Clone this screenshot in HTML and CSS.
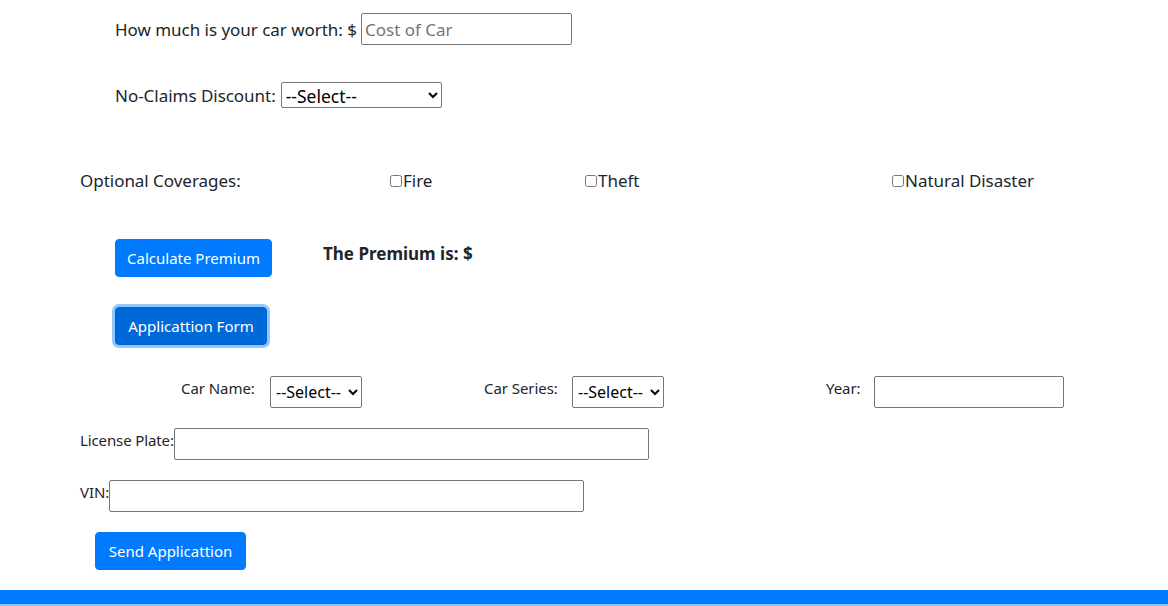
FILE: index.html
```html
<!DOCTYPE html>
<html>
<head>
<meta charset="utf-8">
<link rel="stylesheet" href="styles.css">
</head>
<body>
<main class="page">
  <div class="row row-worth">
    <label class="lbl-lg">How much is your car worth: $</label>
    <input class="inp inp-cost" type="text" placeholder="Cost of Car">
  </div>
  <div class="row row-ncd">
    <label class="lbl-lg">No-Claims Discount:</label>
    <select class="sel sel-ncd"><option>--Select--</option></select>
  </div>
  <div class="row row-cov">
    <span class="lbl-lg cov-title">Optional Coverages:</span>
    <label class="lbl-lg cov cov-fire"><input type="checkbox" class="chk">Fire</label>
    <label class="lbl-lg cov cov-theft"><input type="checkbox" class="chk">Theft</label>
    <label class="lbl-lg cov cov-nat"><input type="checkbox" class="chk">Natural Disaster</label>
  </div>
  <div class="row row-calc">
    <button class="btn">Calculate Premium</button>
    <span class="premium">The Premium is: $</span>
  </div>
  <div class="row row-app">
    <button class="btn btn-focus">Applicattion Form</button>
  </div>
  <div class="row row-car">
    <label class="lbl-sm lbl-name">Car Name:</label>
    <select class="sel sel-sm"><option>--Select--</option></select>
    <label class="lbl-sm lbl-series">Car Series:</label>
    <select class="sel sel-sm"><option>--Select--</option></select>
    <label class="lbl-sm lbl-year">Year:</label>
    <input class="inp inp-year" type="text">
  </div>
  <div class="row row-plate">
    <label class="lbl-sm lbl-plate">License Plate:</label>
    <input class="inp inp-wide" type="text">
  </div>
  <div class="row row-vin">
    <label class="lbl-sm">VIN:</label>
    <input class="inp inp-wide" type="text">
  </div>
  <div class="row row-send">
    <button class="btn">Send Applicattion</button>
  </div>
</main>
<footer class="bar"></footer>
</body>
</html>
```
FILE: styles.css
```css
* { box-sizing: border-box; }
html, body { margin: 0; padding: 0; background: #fff; }
body {
  font-family: "Noto Sans", "Open Sans", sans-serif;
  color: #212529;
  height: 606px;
  overflow: hidden;
}
.page { height: 590px; padding-top: 13px; }
.row { display: flex; align-items: center; }
.lbl-lg { font-size: 17px; letter-spacing: -0.03px; }
.lbl-sm { font-size: 15px; letter-spacing: -0.06px; }

.inp {
  font-family: inherit;
  border: 1px solid #767676;
  border-radius: 2px;
  background: #fff;
  padding: 1px 3px;
}
.inp::placeholder { color: #757575; }
.sel {
  font-family: inherit;
  border: 1px solid #767676;
  border-radius: 2px;
  background: #fff;
  color: #000;
}

.row-worth { padding-left: 115px; height: 32px; }
.row-worth .lbl-lg { margin-right: 4px; }
.inp-cost { width: 211px; height: 32px; font-size: 17px; }

.row-ncd { margin-top: 37px; padding-left: 115px; height: 26px; }
.row-ncd .lbl-lg { margin-right: 5px; }
.sel-ncd { width: 161px; height: 26px; font-size: 17.5px; }

.row-cov { margin-top: 60px; height: 25px; }
.cov-title { width: 390px; padding-left: 80px; }
.cov { display: flex; align-items: center; }
.cov-fire { width: 195px; }
.cov-theft { width: 307px; }
.chk {
  margin: 0 1px 0 0;
  width: 12px;
  height: 12px;
}

.row-calc { margin-top: 46px; padding-left: 115px; height: 38px; }
.btn {
  font-family: inherit;
  font-size: 15px;
  color: #fff;
  background: #007bff;
  border: 1px solid #007bff;
  border-radius: 4px;
  height: 38px;
  padding: 0;
  white-space: nowrap;
  text-align: center;
}
.row-calc .btn { width: 157px; }
.premium {
  font-weight: 700;
  font-size: 17px;
  margin-left: 51px;
  margin-top: -9px;
}

.row-app { margin-top: 30px; padding-left: 115px; height: 38px; }
.btn-focus {
  width: 152px;
  background: #0069d9;
  border-color: #0062cc;
  box-shadow: 0 0 0 3px rgba(38, 143, 255, 0.5);
}

.row-car { margin-top: 31px; height: 32px; align-items: flex-start; }
.row-car .lbl-sm { padding-top: 2px; }
.lbl-name { margin-left: 181px; width: 89px; }
.lbl-series { margin-left: 122px; width: 88px; }
.lbl-year { margin-left: 162px; width: 48px; }
.sel-sm { width: 92px; height: 32px; font-size: 16px; padding: 0 1px; }
.inp-year { width: 190px; height: 32px; }

.row-plate { margin-top: 20px; padding-left: 80px; height: 32px; align-items: flex-start; }
.lbl-plate { letter-spacing: -0.12px; }
.row-plate .lbl-sm, .row-vin .lbl-sm { padding-top: 2px; }
.row-vin { margin-top: 20px; padding-left: 80px; height: 32px; align-items: flex-start; }
.inp-wide { width: 475px; height: 32px; }

.row-send { margin-top: 20px; padding-left: 95px; height: 38px; }
.row-send .btn { width: 151px; }

.bar {
  height: 16px;
  background: #007bff;
  border-bottom: 2px solid #8fc3ff;
}
```
